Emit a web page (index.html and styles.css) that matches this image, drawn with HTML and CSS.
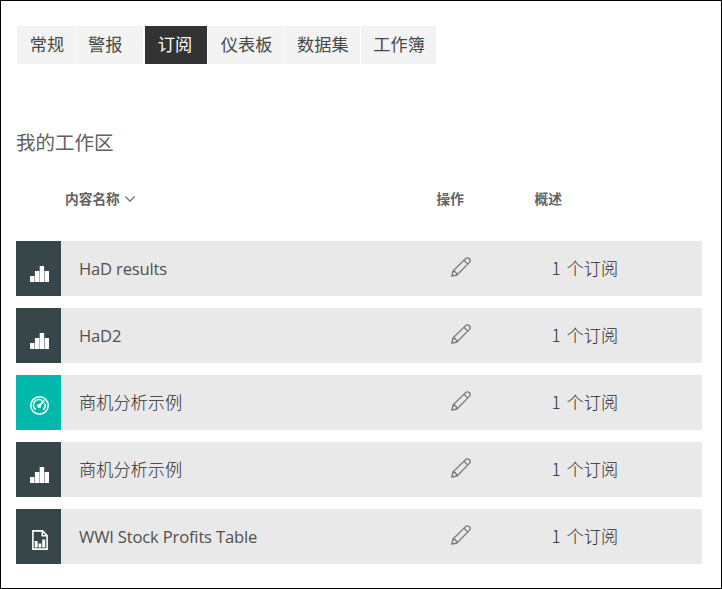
FILE: index.html
```html
<!DOCTYPE html>
<html lang="zh-CN">
<head>
<meta charset="utf-8">
<title>订阅</title>
<link rel="stylesheet" href="styles.css">
</head>
<body>
<svg class="defs" width="0" height="0">
  <symbol id="bars" viewBox="0 0 19 16">
    <path fill="#fff" d="M0 10h4.400v6H0zM4.900 5h4.400v11H4.900zM9.700 0h4.400v16H9.700zM14.600 5H19v11h-4.400z"/>
  </symbol>
  <symbol id="pencil" viewBox="0 0 20 20">
    <path fill="none" stroke="#777" stroke-width="1.300" stroke-linejoin="round" d="M.8 19.200 2 14 14.600 1.600Q16.500.100 18.400 1.700 20 3.500 18.400 5.400L6 18zM2 14Q5.500 14.500 6 18M13 3.200l3.900 3.900"/>
  </symbol>
</svg>
<main class="page">
  <nav class="tabs">
    <a class="tab">常规</a>
    <a class="tab alerts">警报</a>
    <a class="tab active">订阅</a>
    <a class="tab">仪表板</a>
    <a class="tab">数据集</a>
    <a class="tab">工作簿</a>
  </nav>
  <h1 class="title">我的工作区</h1>
  <div class="head">
    <span class="head-name">内容名称
      <svg class="chevron" width="10" height="6" viewBox="0 0 10 6"><path fill="none" stroke="#666" stroke-width="1.100" d="M.4.500 5 5.100 9.600.500"/></svg>
    </span>
    <span>操作</span>
    <span>概述</span>
  </div>
  <div class="list">
    <div class="row">
      <div class="tile"><svg class="bars" width="19" height="16"><use href="#bars"/></svg></div>
      <span class="name latin">HaD results</span>
      <svg class="edit" width="20" height="20"><use href="#pencil"/></svg>
      <span class="count"><span class="num">1</span>个订阅</span>
    </div>
    <div class="row">
      <div class="tile"><svg class="bars" width="19" height="16"><use href="#bars"/></svg></div>
      <span class="name latin">HaD2</span>
      <svg class="edit" width="20" height="20"><use href="#pencil"/></svg>
      <span class="count"><span class="num">1</span>个订阅</span>
    </div>
    <div class="row">
      <div class="tile teal">
        <svg class="gauge" width="19" height="19" viewBox="0 0 19 19"><g fill="none" stroke="#fff"><circle cx="9.500" cy="9.500" r="8.700" stroke-width="1.500"/><path stroke-width="1.500" d="M5.600 13.600A5.600 5.600 0 0 1 12.400 4.700M14.600 7.300A5.600 5.600 0 0 1 13.400 13.600"/><path stroke-width="1.700" d="M9.200 9.900 14.200 4.700"/></g><circle cx="9.200" cy="9.900" r="2" fill="#fff"/></svg>
      </div>
      <span class="name">商机分析示例</span>
      <svg class="edit" width="20" height="20"><use href="#pencil"/></svg>
      <span class="count"><span class="num">1</span>个订阅</span>
    </div>
    <div class="row">
      <div class="tile"><svg class="bars" width="19" height="16"><use href="#bars"/></svg></div>
      <span class="name">商机分析示例</span>
      <svg class="edit" width="20" height="20"><use href="#pencil"/></svg>
      <span class="count"><span class="num">1</span>个订阅</span>
    </div>
    <div class="row">
      <div class="tile">
        <svg class="doc" width="16" height="20" viewBox="0 0 16 20"><path fill="none" stroke="#fff" stroke-width="1.600" d="M.9.900H10.500L15.100 5.500V19.100H.9zM10.300 1V5.700H15"/><path fill="#fff" d="M2.700 11h2.900v6.500H2.700zM6.500 13.500h2.800v4H6.500zM10.200 9.500h3v8h-3z"/></svg>
      </div>
      <span class="name latin">WWI Stock Profits Table</span>
      <svg class="edit" width="20" height="20"><use href="#pencil"/></svg>
      <span class="count"><span class="num">1</span>个订阅</span>
    </div>
  </div>
</main>
</body>
</html>
```

FILE: styles.css
```css
* { box-sizing: border-box; }
body {
  margin: 0;
  background: #fff;
  color: #484848;
  font-family: "Noto Sans CJK SC", sans-serif;
}
.defs { position: absolute; }
.page {
  width: 722px;
  height: 589px;
  padding: 25px 19px 0 15px;
  border: 1px solid #000;
  overflow: hidden;
}
.tabs {
  display: flex;
  gap: 1px;
  height: 38px;
  margin-left: 1px;
}
.tab {
  padding: 0 11px 0 12.700px;
  background: #f3f3f3;
  font-size: 17.200px;
  line-height: 36px;
  white-space: nowrap;
}
.alerts { width: 67px; padding-left: 12px; }
.active {
  width: 62px;
  margin-left: 1px;
  background: #333;
  color: #fff;
}
.title {
  margin: 63px 0 0;
  font-size: 19.500px;
  font-weight: 400;
  line-height: 30px;
  color: #606060;
}
.head {
  display: grid;
  grid-template-columns: 371.500px 98px auto;
  margin-top: 31px;
  padding-left: 49px;
  font-size: 13.700px;
  font-weight: 700;
  line-height: 20px;
  color: #626262;
}
.head-name { display: flex; align-items: center; gap: 5px; }
.chevron { margin-top: 2px; }
.list {
  display: grid;
  gap: 12px;
  margin-top: 32.500px;
}
.row {
  display: grid;
  grid-template-columns: 63px 372px 100.500px 1fr;
  align-items: center;
  height: 55px;
  background: #e9e9e9;
  font-size: 17.200px;
  font-weight: 300;
  line-height: 26px;
  color: #2c2c2c;
}
.tile {
  display: flex;
  width: 45px;
  height: 55px;
  padding-left: 14px;
  background: #374649;
}
.teal { background: #01b8aa; }
.bars { margin-top: 25px; }
.gauge { margin-top: 21px; }
.doc { margin: 21px 0 0 2px; }
.latin {
  margin-top: 2px;
  font-family: "Open Sans", "Noto Sans", sans-serif;
  font-size: 16.600px;
  font-weight: 400;
  letter-spacing: -.18px;
  color: #505050;
}
.edit { margin-top: -3px; }
.count { display: flex; gap: 6px; }
.num { width: 9px; }
```
